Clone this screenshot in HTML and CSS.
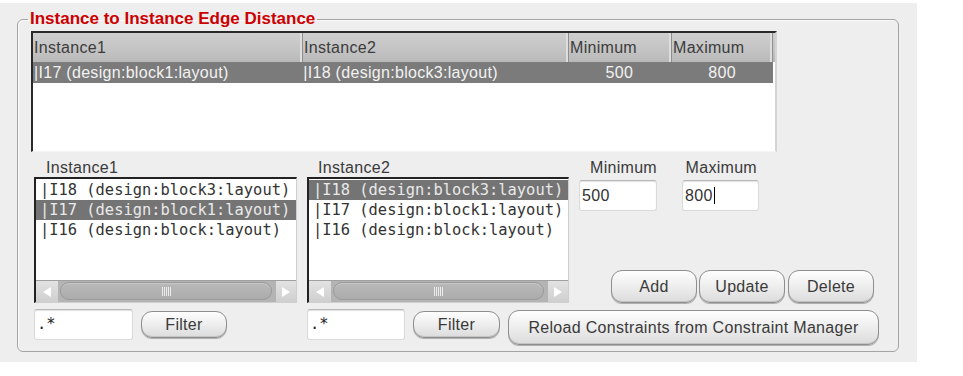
FILE: index.html
```html
<!DOCTYPE html>
<html>
<head>
<meta charset="utf-8">
<link rel="stylesheet" href="styles.css">
</head>
<body>
<div class="panel">
  <fieldset class="group">
    <legend class="title">Instance to Instance Edge Distance</legend>
    <div class="table">
      <div class="thead">
        <div class="th c1">Instance1</div>
        <div class="th c2">Instance2</div>
        <div class="th c3">Minimum</div>
        <div class="th c4">Maximum</div>
      </div>
      <div class="trow sel">
        <div class="td c1">|I17 (design:block1:layout)</div>
        <div class="td c2">|I18 (design:block3:layout)</div>
        <div class="td c3 num">500</div>
        <div class="td c4 num">800</div>
      </div>
    </div>

    <div class="lower">
      <div class="listcol w1">
        <div class="label">Instance1</div>
        <div class="list">
          <div class="items">
            <div class="item">|I18 (design:block3:layout)</div>
            <div class="item sel">|I17 (design:block1:layout)</div>
            <div class="item">|I16 (design:block:layout)</div>
          </div>
          <div class="hscroll">
            <div class="arrow left"><span class="tri-l"></span></div>
            <div class="thumb"><span class="grip"></span></div>
            <div class="arrow right"><span class="tri-r"></span></div>
          </div>
        </div>
      </div>
      <div class="listcol w2">
        <div class="label l2">Instance2</div>
        <div class="list">
          <div class="items">
            <div class="item sel">|I18 (design:block3:layout)</div>
            <div class="item">|I17 (design:block1:layout)</div>
            <div class="item">|I16 (design:block:layout)</div>
          </div>
          <div class="hscroll">
            <div class="arrow left"><span class="tri-l"></span></div>
            <div class="thumb"><span class="grip"></span></div>
            <div class="arrow right"><span class="tri-r"></span></div>
          </div>
        </div>
      </div>
      <div class="side">
        <div class="minmax">
          <div class="field fmin">
            <div class="flabel">Minimum</div>
            <div class="input num-in">500</div>
          </div>
          <div class="field fmax">
            <div class="flabel">Maximum</div>
            <div class="input num-in">800<span class="caret"></span></div>
          </div>
        </div>
        <div class="btns">
          <div class="btn b-add">Add</div>
          <div class="btn b-upd">Update</div>
          <div class="btn b-del">Delete</div>
        </div>
      </div>
    </div>

    <div class="bottom">
      <div class="input filt f1">.*</div>
      <div class="btn filter">Filter</div>
      <div class="input filt f2">.*</div>
      <div class="btn filter">Filter</div>
      <div class="btn reload">Reload Constraints from Constraint Manager</div>
    </div>
  </fieldset>
</div>
</body>
</html>
```
FILE: styles.css
```css
html, body {
  margin: 0;
  padding: 0;
  background: #ffffff;
}
body {
  font-family: "Liberation Sans", Arial, sans-serif;
  font-size: 16px;
  letter-spacing: 0.3px;
  color: #3a3a3a;
}
.panel {
  margin-top: 3px;
  width: 917px;
  height: 359px;
  box-sizing: border-box;
  padding: 7px 0 0 17px;
  background: #eeeeee;
}
.group {
  margin: 0;
  width: 882px;
  height: 342px;
  box-sizing: border-box;
  padding: 3px 0 0 13px;
  border: 1px solid #a4a4a4;
  border-radius: 6px;
  box-shadow: inset 1px 1px 0 #fafafa;
}
.title {
  padding: 0 2px;
  margin-left: -3px;
  font-weight: bold;
  font-size: 17px;
  line-height: 18px;
  letter-spacing: 0;
  color: #cc0000;
}

/* table */
.table {
  width: 746px;
  height: 121px;
  box-sizing: border-box;
  background: #ffffff;
  border-top: 2px solid #2a2a2a;
  border-left: 2px solid #2a2a2a;
  border-right: 2px solid #d4d4d4;
  border-bottom: 1px solid #f4f4f4;
}
.thead, .trow {
  display: flex;
}
.thead {
  height: 29px;
  background: linear-gradient(#cfcfcf, #c3c3c3 60%, #b9b9b9);
}
.th {
  box-sizing: border-box;
  line-height: 29px;
  padding-left: 1px;
  color: #3c3c3c;
  border-right: 1px solid #8f8f8f;
  box-shadow: inset -2px 0 0 #dedede;
}
.c1 { width: 270px; }
.c2 { width: 266px; }
.c3 { width: 103px; }
.c4 { width: 103px; }
.th.c4 { width: 101px; }
.trow {
  height: 21px;
}
.trow.sel {
  background: #7b7b7b;
  width: 740px;
}
.td {
  box-sizing: border-box;
  line-height: 21px;
  padding-left: 1px;
  color: #f2f2f2;
}
.td.num {
  text-align: center;
}

/* lower area */
.lower {
  display: flex;
  margin-left: 3px;
  gap: 10px;
}
.listcol.w1 { width: 263px; }
.listcol.w2 { width: 262px; }
.label {
  margin-top: 7px;
  height: 18px;
  line-height: 18px;
  padding-left: 12px;
  color: #3a3a3a;
}
.label.l2 { padding-left: 11px; }
.list {
  height: 126px;
  box-sizing: border-box;
  background: #ffffff;
  border-top: 2px solid #222222;
  border-left: 2px solid #222222;
  border-right: 1px solid #cfcfcf;
  border-bottom: 1px solid #cfcfcf;
  display: flex;
  flex-direction: column;
}
.items {
  flex: 1;
  padding-top: 1px;
}
.item {
  height: 20px;
  line-height: 20px;
  padding-left: 4px;
  font-family: "DejaVu Sans Mono", "Liberation Mono", monospace;
  font-size: 15.4px;
  letter-spacing: 0;
  color: #333333;
  white-space: nowrap;
}
.item.sel {
  background: #747474;
  color: #e9e9e9;
}
.hscroll {
  height: 22px;
  display: flex;
  background: #b4b4b4;
  border-top: 1px solid #a0a0a0;
  box-sizing: border-box;
}
.arrow {
  width: 22px;
  background: linear-gradient(#e2e2e2, #cfcfcf);
  display: flex;
  align-items: center;
  justify-content: center;
}
.arrow.right { width: 20px; }
.tri-l {
  width: 0;
  height: 0;
  border-top: 5px solid transparent;
  border-bottom: 5px solid transparent;
  border-right: 8px solid #ffffff;
}
.tri-r {
  width: 0;
  height: 0;
  border-top: 5px solid transparent;
  border-bottom: 5px solid transparent;
  border-left: 8px solid #ffffff;
}
.thumb {
  flex: 1;
  margin: 1px 4px 2px 2px;
  border-radius: 9px;
  background: linear-gradient(#b9b9b9, #acacac);
  border: 1px solid #9a9a9a;
  box-shadow: inset 0 1px 0 #c8c8c8;
  display: flex;
  align-items: center;
  justify-content: center;
}
.grip {
  width: 9px;
  height: 9px;
  background: repeating-linear-gradient(90deg, #ececec 0 1px, transparent 1px 2px);
}

/* side */
.side {
  width: 300px;
  display: flex;
  flex-direction: column;
  justify-content: space-between;
  height: 151px;
}
.minmax {
  display: flex;
  gap: 25px;
}
.field.fmin { width: 78px; }
.field.fmax { width: 77px; }
.flabel {
  margin-top: 7px;
  height: 18px;
  line-height: 18px;
  text-align: right;
  color: #3a3a3a;
}
.fmax .flabel { padding-right: 2px; }
.input {
  box-sizing: border-box;
  background: #ffffff;
  border: 1px solid #dadada;
  border-top-color: #b8b8b8;
  border-radius: 3px;
  box-shadow: inset 0 1px 1px rgba(0, 0, 0, 0.12);
}
.num-in {
  margin-top: 3px;
  height: 31px;
  line-height: 29px;
  padding-left: 2px;
  color: #333333;
  display: flex;
  align-items: center;
}
.caret {
  display: inline-block;
  width: 1px;
  height: 17px;
  background: #000000;
  margin-left: 1px;
}
.btns {
  display: flex;
  margin-left: 32px;
}
.btn {
  box-sizing: border-box;
  display: flex;
  align-items: center;
  justify-content: center;
  border: 1px solid #8e8e8e;
  border-radius: 11px;
  background: linear-gradient(#fefefe, #efefef 45%, #dcdcdc 100%);
  box-shadow: inset 0 -1px 0 #c4c4c4, 0 1px 0 #b0b0b0;
  color: #3a3a3a;
}
.btns .btn {
  width: 86px;
  height: 33px;
}
.b-upd { margin-left: 2px; }
.b-del { margin-left: 3px; }

/* bottom row */
.bottom {
  display: flex;
  align-items: flex-start;
  margin-left: 3px;
  margin-top: 6px;
}
.filt {
  height: 31px;
  line-height: 29px;
  padding-left: 2px;
  font-family: "DejaVu Sans Mono", "Liberation Mono", monospace;
  font-size: 15.4px;
  letter-spacing: 0;
  color: #222222;
}
.f1 { width: 99px; }
.f2 { width: 98px; margin-left: 80px; }
.btn.filter {
  margin-left: 8px;
  margin-top: 2px;
  width: 86px;
  height: 27px;
}
.f2 + .btn.filter { width: 87px; }
.btn.reload {
  margin-left: 8px;
  margin-top: 1px;
  width: 371px;
  height: 35px;
}
```
